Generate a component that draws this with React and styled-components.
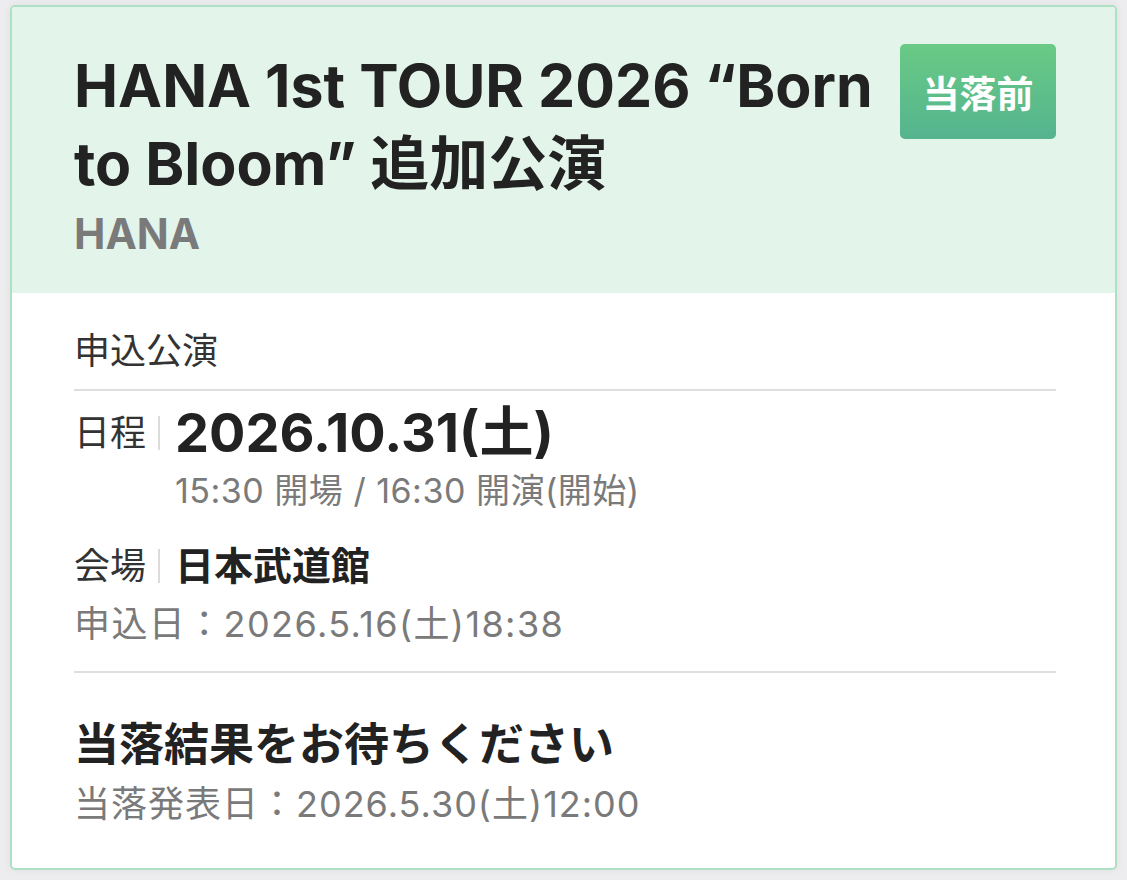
import React from "react";
import styled, { createGlobalStyle } from "styled-components";

const Global = createGlobalStyle`
  html, body { margin: 0; padding: 0; background: #ededf0; }
  body { font-family: Inter, "Noto Sans CJK JP", sans-serif; }
  * { box-sizing: border-box; }
`;

const Page = styled.div`
  padding: 5px 10px 10px 10px;
`;

const Card = styled.div`
  width: 1107px;
  height: 865px;
  border: 2px solid #aee0c3;
  border-radius: 5px;
  background: #ffffff;
  overflow: hidden;
  box-shadow: 0 0 8px rgba(0, 0, 0, 0.06);
  display: flex;
  flex-direction: column;
`;

const Header = styled.div`
  background: #e3f5eb;
  height: 286px;
  flex: none;
  padding: 37px 59px 0 62px;
  display: flex;
  align-items: flex-start;
  gap: 10px;
`;

const TitleBlock = styled.div`
  flex: 1;
  min-width: 0;
  padding-top: 3px;
`;

const Title = styled.h1`
  margin: 0;
  font-size: 59px;
  line-height: 78px;
  font-weight: 700;
  color: #222;
`;

const Artist = styled.div`
  margin-top: 6px;
  font-size: 42px;
  line-height: 50px;
  font-weight: 700;
  color: #7a7a7a;
`;

const Badge = styled.div`
  flex: none;
  width: 156px;
  height: 95px;
  border-radius: 5px;
  background: linear-gradient(180deg, #69ca85 0%, #55b48e 100%);
  color: #fff;
  font-size: 37px;
  font-weight: 700;
  display: flex;
  align-items: center;
  justify-content: center;
`;

const Body = styled.div`
  padding: 33px 59px 0 62px;
  display: flex;
  flex-direction: column;
`;

const SectionLabel = styled.div`
  font-size: 36px;
  line-height: 50px;
  color: #333;
  padding-bottom: 13px;
  border-bottom: 2px solid #dedede;
`;

const InfoRow = styled.div`
  display: flex;
  align-items: flex-start;
  margin-top: ${(p) => p.$top}px;
`;

const RowLabel = styled.div`
  flex: none;
  font-size: 36px;
  line-height: ${(p) => p.$lh}px;
  color: #333;
  display: flex;
  align-items: center;
`;

const Sep = styled.span`
  display: inline-block;
  width: 2px;
  height: 34px;
  background: #dcdcdc;
  margin: 0 15px 0 12px;
`;

const RowValue = styled.div`
  display: flex;
  flex-direction: column;
`;

const DateText = styled.div`
  font-size: 54px;
  line-height: 56px;
  font-weight: 700;
  color: #222;
`;

const Venue = styled.div`
  font-size: 39px;
  line-height: 48px;
  font-weight: 700;
  color: #222;
`;

const Sub = styled.div`
  font-size: ${(p) => p.$size || 36}px;
  letter-spacing: ${(p) => p.$ls || 1}px;
  line-height: 44px;
  color: #7a7a7a;
  margin-top: ${(p) => p.$top || 0}px;
`;

const Divider = styled.div`
  height: 2px;
  background: #dedede;
  margin-top: ${(p) => p.$top}px;
`;

const ResultTitle = styled.div`
  margin-top: 44px;
  font-size: 45px;
  line-height: 56px;
  font-weight: 700;
  color: #222;
`;

export default function App() {
  return (
    <>
      <Global />
      <Page>
        <Card>
          <Header>
            <TitleBlock>
              <Title>HANA 1st TOUR 2026 “Born to Bloom” 追加公演</Title>
              <Artist>HANA</Artist>
            </TitleBlock>
            <Badge>当落前</Badge>
          </Header>
          <Body>
            <SectionLabel>申込公演</SectionLabel>
            <InfoRow $top={14}>
              <RowLabel $lh={56}>
                日程
                <Sep />
              </RowLabel>
              <RowValue>
                <DateText>2026.10.31(土)</DateText>
                <Sub $top={8} $size={34} $ls={0.5}>
                  15:30 開場 / 16:30 開演(開始)
                </Sub>
              </RowValue>
            </InfoRow>
            <InfoRow $top={29}>
              <RowLabel $lh={48}>
                会場
                <Sep />
              </RowLabel>
              <RowValue>
                <Venue>日本武道館</Venue>
              </RowValue>
            </InfoRow>
            <Sub $top={12} $ls={1.4}>申込日：2026.5.16(土)18:38</Sub>
            <Divider $top={25} />
            <ResultTitle>当落結果をお待ちください</ResultTitle>
            <Sub $top={9}>当落発表日：2026.5.30(土)12:00</Sub>
          </Body>
        </Card>
      </Page>
    </>
  );
}
